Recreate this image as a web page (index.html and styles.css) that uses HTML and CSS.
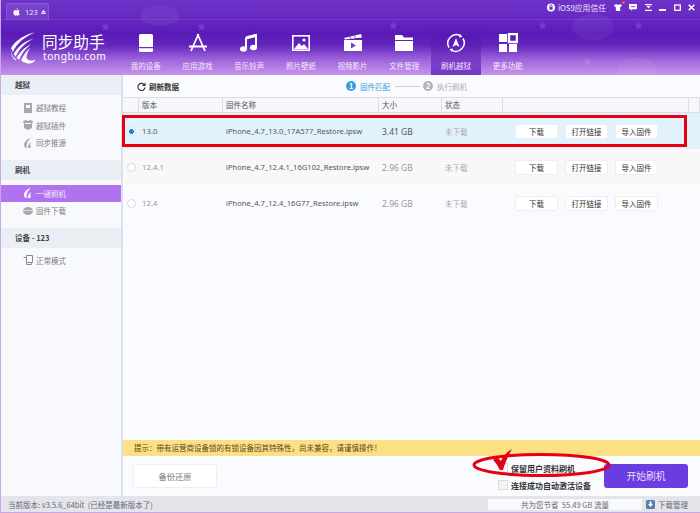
FILE: index.html
```html
<!DOCTYPE html>
<html lang="zh-CN">

<head>
  <meta charset="UTF-8" />
  <title>同步助手</title>
  <link rel="stylesheet" href="styles.css">
</head>

<body>
  <div class="app">
    <!-- Header -->
    <header class="header">
      <span class="cloud cloud-a"></span>
      <span class="cloud cloud-b"></span>
      <span class="cloud cloud-c"></span>
      <span class="star star-a"></span>
      <span class="star star-b"></span>
      <span class="star star-c"></span>
      <span class="star star-d"></span>
      <span class="star star-e"></span>
      <span class="star star-f"></span>

      <div class="top-strip">
        <div class="device-tab">
          <svg class="apple" viewBox="0 0 12 14"><path d="M8.400 0c.1 1.400-1 2.700-2.400 2.700C5.900 1.400 7.100.1 8.400 0zM11.500 10c-.6 1.500-1.600 3.500-2.900 3.500-.9 0-1.300-.6-2.400-.6s-1.500.6-2.400.6C2.300 13.500.5 10.500.5 8c0-2.600 1.700-4.300 3.400-4.300 1 0 1.700.6 2.400.6s1.400-.7 2.600-.7c1 0 2 .5 2.600 1.400-2.100 1.200-1.800 4.100 0 5z" fill="#fff"/></svg>
          <span>123</span>
          <svg class="eject" viewBox="0 0 6 5"><path d="M3 0l3 3H0zM0 4h6v1H0z" fill="#fff"/></svg>
        </div>
        <div class="top-tools">
          <svg class="tool lock" viewBox="0 0 9 10"><circle cx="4.500" cy="5" r="4.500" fill="#fff"/><rect x="2.700" y="4.500" width="3.600" height="3" fill="#6a2cc4"/><path d="M3.300 4.500V3.300a1.200 1.200 0 0 1 2.400 0v1.200" fill="none" stroke="#6a2cc4"/></svg>
          <span class="trust">iOS9应用信任</span>
          <span class="shirt-wrap">
            <svg class="tool wide" viewBox="0 0 9 8"><path d="M2.500 0L0 1.500l1 2 1-.5V8h5V3l1 .5 1-2L6.500 0C6 1.200 3 1.200 2.500 0z" fill="#fff"/></svg>
            <i class="red-dot"></i>
          </span>
          <svg class="tool wide" viewBox="0 0 9 8"><path d="M0 0h9v6H4L2.500 8V6H0z" fill="#fff"/><path d="M2 3h5" stroke="#6a2cc4"/></svg>
          <svg class="tool" viewBox="0 0 7 7"><path d="M0 0h7v1.300H0zM0 5.700h7V7H0zM1.500 2h4L3.500 4.500z" fill="#fff"/></svg>
          <svg class="tool" viewBox="0 0 7 7"><path d="M0 5h7v2H0z" fill="#fff"/></svg>
          <svg class="tool" viewBox="0 0 7 7"><rect x=".7" y="1" width="5.600" height="5.300" fill="none" stroke="#fff" stroke-width="1.300"/></svg>
          <svg class="tool" viewBox="0 0 7 7"><path d="M.7.7l5.600 5.600M6.300.7L.7 6.300" stroke="#fff" stroke-width="1.600"/></svg>
        </div>
      </div>

      <div class="header-main">
        <div class="logo">
          <svg class="logo-mark" viewBox="0 0 30 33">
            <path d="M27 0C16 2 6 8 1 17c1 1 2 3 2 4C7 12 16 4 27 0z" fill="#fff"/>
            <path d="M26 6C16 9 9 14 4 23l2 3C10 17 16 11 26 6z" fill="#fff"/>
            <path d="M23 12c-6 3-12 8-16 15l3 2c2-6 7-12 13-17z" fill="#fff"/>
            <path d="M22 16c-5 4-8 9-10 14 2 2 5 3 8 3 4 0 7-2 7-4-3 2-7 1-9-1-1-3 1-8 4-12z" fill="#fff"/>
            <path d="M1 20c0 4 2 8 5 10l1-1C4 27 2 24 1 20z" fill="#f1e6fb"/>
          </svg>
          <div class="logo-text">
            <div class="logo-cn">同步助手</div>
            <div class="logo-en">tongbu.com</div>
          </div>
        </div>
        <nav class="nav">
          <a class="nav-item">
            <svg viewBox="0 0 20 20"><path d="M4.500 1h11A1.500 1.500 0 0 1 17 2.500V14H3V2.500A1.500 1.500 0 0 1 4.500 1zM3 15.200h14v2.300a1.500 1.500 0 0 1-1.500 1.500h-11A1.500 1.500 0 0 1 3 17.500z" fill="#fff"/></svg>
            <span>我的设备</span>
          </a>
          <a class="nav-item">
            <svg viewBox="0 0 20 20"><path d="M10.500 1L3 18M9.500 1L17 18M1 13.500h18" fill="none" stroke="#fff" stroke-width="1.800"/></svg>
            <span>应用游戏</span>
          </a>
          <a class="nav-item">
            <svg viewBox="0 0 20 20"><path d="M7 4.500L17 2v12.500M7 4.500V16" fill="none" stroke="#fff" stroke-width="2"/><path d="M7 3.500L17 1v3L7 6.500z" fill="#fff"/><ellipse cx="4.500" cy="16" rx="3.500" ry="2.800" fill="#fff"/><ellipse cx="14.500" cy="14.500" rx="3.500" ry="2.800" fill="#fff"/></svg>
            <span>音乐铃声</span>
          </a>
          <a class="nav-item">
            <svg viewBox="0 0 20 20"><rect x="1.800" y="2.800" width="16.400" height="14.400" fill="none" stroke="#fff" stroke-width="1.600"/><path d="M3 16l5-6 3 3 2-2 4 5z" fill="#fff"/><circle cx="13" cy="7" r="1.600" fill="#fff"/></svg>
            <span>照片壁纸</span>
          </a>
          <a class="nav-item">
            <svg viewBox="0 0 20 20"><path d="M1 7h18v11H1z" fill="#fff"/><path d="M1 5l17-4 1 3.500L2 6.500z" fill="#fff"/><path d="M8 9.500l5 3-5 3z" fill="#7a3dcb"/><path d="M6 2.800l2 3M10.500 1.800l2 3" stroke="#7a3dcb"/></svg>
            <span>视频影片</span>
          </a>
          <a class="nav-item">
            <svg viewBox="0 0 20 20"><path d="M1 2h7l2 2.500h9V7H1zM1 8h18v10H1z" fill="#fff"/></svg>
            <span>文件管理</span>
          </a>
          <a class="nav-item active">
            <svg viewBox="0 0 20 20"><path d="M3 14.500A8.500 8.500 0 0 1 14.500 2.800M17 5.500A8.500 8.500 0 0 1 5.500 17.200" fill="none" stroke="#fff" stroke-width="1.500"/><path d="M14 1l2.500 3-3.500.5zM6 19l-2.500-3 3.500-.5z" fill="#fff"/><path d="M10 5l3.500 9-3.500-2-3.500 2z" fill="#fff"/></svg>
            <span>刷机越狱</span>
          </a>
          <a class="nav-item">
            <svg viewBox="0 0 20 20"><rect x="1" y="1" width="8" height="8" fill="#fff"/><rect x="11" y="1" width="8" height="8" fill="none" stroke="#fff" stroke-width="2.500"/><rect x="1" y="11" width="8" height="8" fill="#fff"/><rect x="11" y="11" width="8" height="8" fill="#fff"/></svg>
            <span>更多功能</span>
          </a>
        </nav>
      </div>
    </header>

    <div class="content">
      <!-- Sidebar -->
      <aside class="sidebar">
        <div class="side-title">越狱</div>
        <ul class="side-list">
          <li>
            <svg viewBox="0 0 10 10"><path d="M1 0h8v10H1z" fill="#a8a8a8"/><path d="M3 2h4v3H3z" fill="#f8f9fc"/></svg>
            越狱教程
          </li>
          <li>
            <svg viewBox="0 0 10 10"><path d="M0 1l3-1 2 1 2-1 3 1-1 3v4l-4 2-4-2V4z" fill="#a8a8a8"/><path d="M2 3.500h6" stroke="#f8f9fc"/></svg>
            越狱插件
          </li>
          <li>
            <svg viewBox="0 0 10 10"><path d="M8 0C4 1 1 4 1 7c0 1 1 3 3 3-1-3 0-7 4-10z" fill="#a8a8a8"/><path d="M8 4C6 5 5 7 5 10c1 0 2 0 3-1-1-1-1-3 0-5z" fill="#a8a8a8"/></svg>
            同步推源
          </li>
        </ul>
        <div class="side-title">刷机</div>
        <ul class="side-list flash">
          <li class="active">
            <svg viewBox="0 0 10 10"><path d="M8 0C4 1 1 4 1 7c0 1 1 3 3 3-1-3 0-7 4-10z" fill="#fff"/><path d="M8 4C6 5 5 7 5 10c1 0 2 0 3-1-1-1-1-3 0-5z" fill="#fff"/></svg>
            一键刷机
          </li>
          <li>
            <svg viewBox="0 0 10 10"><ellipse cx="5" cy="5" rx="5" ry="4" fill="#a8a8a8"/><path d="M0 4.500h10" stroke="#f8f9fc" stroke-width=".6"/></svg>
            固件下载
          </li>
        </ul>
        <div class="side-title">设备 - 123</div>
        <ul class="side-list">
          <li>
            <svg viewBox="0 0 10 10"><path d="M3.500.5h6v7h-6zM.5 2.500h3v7h5v-2" fill="none" stroke="#8a8a8a"/></svg>
            正常模式
          </li>
        </ul>
      </aside>

      <!-- Main -->
      <main class="main">
        <div class="toolbar">
          <div class="refresh">
            <svg viewBox="0 0 10 10"><path d="M8.500 3.500A4 4 0 1 0 9 6" fill="none" stroke="#333" stroke-width="1.200"/><path d="M9.500 .5v4h-4z" fill="#333"/></svg>
            刷新数据
          </div>
          <div class="steps">
            <i class="step-num current">1</i>
            <span class="step-text current">固件匹配</span>
            <i class="step-line"></i>
            <i class="step-num">2</i>
            <span class="step-text">执行刷机</span>
          </div>
        </div>

        <div class="table-head">
          <div></div>
          <div>版本</div>
          <div>固件名称</div>
          <div>大小</div>
          <div>状态</div>
          <div></div>
          <div></div>
        </div>

        <div class="rows">
          <div class="row selected">
            <div class="radio-cell"><i class="radio on"></i></div>
            <div class="ver">13.0</div>
            <div class="name">iPhone_4.7_13.0_17A577_Restore.ipsw</div>
            <div class="size">3.41 GB</div>
            <div class="state">未下载</div>
            <div class="actions">
              <button class="mini-btn">下载</button>
              <button class="mini-btn">打开链接</button>
              <button class="mini-btn">导入固件</button>
            </div>
          </div>
          <div class="row alt">
            <div class="radio-cell"><i class="radio"></i></div>
            <div class="ver">12.4.1</div>
            <div class="name">iPhone_4.7_12.4.1_16G102_Restore.ipsw</div>
            <div class="size">2.96 GB</div>
            <div class="state">未下载</div>
            <div class="actions">
              <button class="mini-btn">下载</button>
              <button class="mini-btn">打开链接</button>
              <button class="mini-btn">导入固件</button>
            </div>
          </div>
          <div class="row">
            <div class="radio-cell"><i class="radio"></i></div>
            <div class="ver">12.4</div>
            <div class="name">iPhone_4.7_12.4_16G77_Restore.ipsw</div>
            <div class="size">2.96 GB</div>
            <div class="state">未下载</div>
            <div class="actions">
              <button class="mini-btn">下载</button>
              <button class="mini-btn">打开链接</button>
              <button class="mini-btn">导入固件</button>
            </div>
          </div>
        </div>

        <div class="notice">提示：带有运营商设备锁的有锁设备因其特殊性，尚未兼容，请谨慎操作！</div>

        <div class="bottom">
          <button class="backup-btn">备份还原</button>
          <div class="options">
            <label class="option"><i class="check"></i>保留用户资料刷机</label>
            <label class="option"><i class="check"></i>连接成功自动激活设备</label>
          </div>
          <button class="start-btn">开始刷机</button>
        </div>
      </main>
    </div>

    <!-- Status bar -->
    <footer class="status">
      <div class="version">当前版本: v3.5.6_64bit &nbsp;(已经是最新版本了)</div>
      <div class="saved">共为您节省 &nbsp;55.49 GB 流量</div>
      <div class="downloads">
        <svg viewBox="0 0 9 9"><rect width="9" height="9" rx="1.500" fill="#5a7fa8"/><path d="M3.500 1.500h2V4H7L4.500 7 2 4h1.500z" fill="#fff"/></svg>
        下载管理
      </div>
    </footer>

    <!-- Red annotations drawn over the window -->
    <div class="mark-rect"></div>
    <svg class="mark-oval" viewBox="0 0 700 513">
      <ellipse cx="541.500" cy="465" rx="67.500" ry="10.500" fill="none" stroke="#e60012" stroke-width="3"/>
      <path d="M493 460l4-3 4 4c2-5 6-9 11-12-4 7-7 14-9 21h-3c-2-4-4-7-7-10z" fill="#e60012"/>
    </svg>
  </div>
</body>

</html>
```

FILE: styles.css
```css
* {
  box-sizing: border-box;
}

body {
  margin: 0;
  font-family: "Noto Sans CJK SC", "Noto Sans", sans-serif;
  font-size: 7.5px;
  color: #444;
  background: #f8f9fc;
  overflow: hidden;
}

.app {
  position: relative;
  display: flex;
  flex-direction: column;
  width: 700px;
  height: 513px;
  border-left: 1px solid #c9a8ea;
  border-bottom: 1px solid #c9a8ea;
  overflow: hidden;
}

/* Header */
.header {
  position: relative;
  flex: none;
  height: 75px;
  margin-left: -1px;
  background: linear-gradient(#6e33c8 0, #662ac2 18px, #5a1ab8 34px, #6126bc 45px, #a066dc 60px, #c893ec 75px);
  overflow: hidden;
}

.cloud {
  position: absolute;
  border-radius: 50%;
  background: rgba(255, 255, 255, 0.05);
}

.cloud-a {
  left: 140px;
  top: 6px;
  width: 40px;
  height: 20px;
}

.cloud-b {
  left: 572px;
  top: 14px;
  width: 42px;
  height: 26px;
}

.cloud-c {
  left: 617px;
  top: 58px;
  width: 40px;
  height: 24px;
}

.star {
  position: absolute;
  width: 9px;
  height: 9px;
  background: rgba(255, 255, 255, 0.13);
  clip-path: polygon(50% 0, 63% 35%, 100% 38%, 71% 60%, 81% 96%, 50% 75%, 19% 96%, 29% 60%, 0 38%, 37% 35%);
}

.star-a {
  left: 101px;
  top: 22px;
}

.star-b {
  left: 197px;
  top: 22px;
}

.star-c {
  left: 389px;
  top: 21px;
}

.star-d {
  left: 538px;
  top: 21px;
}

.star-e {
  left: 634px;
  top: 21px;
}

.star-f {
  left: 583px;
  top: 57px;
}

.top-strip {
  position: relative;
  display: flex;
  justify-content: space-between;
  height: 20px;
  padding-left: 6px;
  border-bottom: 1px solid rgba(255, 255, 255, 0.08);
}

.device-tab {
  display: flex;
  align-items: center;
  width: 43px;
  height: 17px;
  margin-top: 3px;
  padding-left: 6px;
  color: #f0e6fb;
  font-family: "Noto Sans", sans-serif;
  font-size: 7.500px;
  background: rgba(255, 255, 255, 0.09);
  border: 1px solid rgba(255, 255, 255, 0.12);
  border-bottom: none;
  border-radius: 2px 2px 0 0;
}

.apple {
  width: 7px;
  height: 8px;
  margin-right: 5px;
}

.eject {
  width: 5px;
  height: 4px;
  margin-left: 3px;
}

.top-tools {
  display: flex;
  align-items: center;
  gap: 7.500px;
  padding-right: 5px;
  padding-bottom: 4px;
}

.tool {
  display: block;
  width: 7px;
  height: 7px;
}

.tool.wide {
  width: 8px;
}

.lock {
  width: 8px;
  height: 9px;
  margin-right: -5px;
}

.trust {
  color: #efe3fb;
  font-size: 7.800px;
}

.shirt-wrap {
  position: relative;
  display: block;
}

.red-dot {
  position: absolute;
  top: -3px;
  right: -3px;
  width: 3px;
  height: 3px;
  border-radius: 50%;
  background: #ff5a36;
}

.header-main {
  position: relative;
  display: flex;
  height: 55px;
}

.logo {
  display: flex;
  width: 120px;
  padding: 12px 0 0 10px;
}

.logo-mark {
  flex: none;
  width: 28px;
  height: 32px;
}

.logo-text {
  margin-left: 4px;
  color: #fff;
}

.logo-cn {
  font-size: 15.700px;
  line-height: 19px;
  margin-top: 0;
  white-space: nowrap;
}

.logo-en {
  font-family: "Noto Sans", sans-serif;
  font-size: 10.200px;
  line-height: 10px;
  letter-spacing: 0.500px;
  margin-left: 1px;
}

.nav {
  display: flex;
  gap: 2px;
  margin-left: 1px;
}

.nav-item {
  display: flex;
  flex-direction: column;
  align-items: center;
  width: 49.700px;
  padding-top: 13px;
  color: #f3e9fc;
}

.nav-item svg {
  width: 20px;
  height: 20px;
}

.nav-item span {
  margin-top: 7px;
  line-height: 12px;
  white-space: nowrap;
}

.nav-item.active {
  background: linear-gradient(rgba(80, 20, 170, 0) 0, rgba(80, 20, 170, 0.45) 30px, #7436c4 55px);
}

/* Sidebar */
.content {
  display: flex;
  flex: 1;
  min-height: 0;
}

.sidebar {
  flex: none;
  width: 122px;
  background: #f8f9fc;
  border-right: 2px solid #dcdff0;
}

.side-title {
  height: 20px;
  padding-left: 14px;
  line-height: 20px;
  font-weight: 700;
  color: #444;
  background: #eaeef5;
}

.side-list {
  margin: 0;
  padding: 4px 0 8px;
  list-style: none;
}

.side-list.flash {
  padding-top: 5px;
}

.side-list li {
  display: flex;
  align-items: center;
  height: 17.500px;
  padding-left: 22px;
  color: #808080;
}

.side-list li svg {
  width: 10px;
  height: 10px;
  margin-right: 3px;
}

.side-list li.active {
  color: #f3e9fc;
  background: #b072ee;
}

/* Main */
.main {
  display: flex;
  flex: 1;
  flex-direction: column;
  min-width: 0;
  background: #fafbfe;
}

.toolbar {
  display: flex;
  flex: none;
  align-items: center;
  height: 22px;
  padding-left: 14px;
}

.refresh {
  display: flex;
  align-items: center;
  width: 209px;
  font-weight: 700;
  color: #333;
}

.refresh svg {
  width: 9px;
  height: 9px;
  margin-right: 3px;
}

.steps {
  display: flex;
  align-items: center;
  color: #b0b0b0;
}

.step-num {
  display: block;
  width: 10px;
  height: 10px;
  margin-right: 4px;
  border-radius: 50%;
  color: #fff;
  font-style: normal;
  font-weight: 700;
  font-size: 7px;
  line-height: 10px;
  text-align: center;
  background: #b4b4b4;
}

.step-num.current {
  background: #3a9ddb;
}

.step-text.current {
  color: #3a9ddb;
}

.step-line {
  display: block;
  width: 25px;
  height: 1px;
  margin: 0 3px 0 5px;
  background: #d0d0d0;
}

.table-head,
.row {
  display: grid;
  grid-template-columns: 16px 84px 156px 63px 61px 186px 11px;
}

.table-head {
  flex: none;
  height: 16px;
  line-height: 14px;
  color: #555;
  background: #f6f7fa;
  border-top: 1px solid #dcdde4;
  border-bottom: 1px solid #dcdde4;
}

.table-head div {
  padding-left: 3px;
  border-right: 1px solid #dcdde4;
}

.rows {
  flex: 1;
  min-height: 0;
}

.row {
  align-items: center;
  height: 36px;
  color: #999;
}

.row.selected {
  color: #555;
  background: #e2f2fd;
}

.row.alt {
  background: #f8f8f8;
}

.radio-cell {
  display: flex;
  justify-content: center;
}

.radio {
  display: block;
  width: 9px;
  height: 9px;
  background: #fff;
  border: 1px solid #d8d8d8;
  border-radius: 50%;
}

.radio.on {
  border-color: #d2e2ee;
  background: radial-gradient(circle, #1a86d6 0, #1a86d6 2.200px, #fff 2.800px);
}

.size {
  padding-left: 3px;
  font-family: "Noto Sans", sans-serif;
  font-size: 8.500px;
}

.ver {
  padding-left: 3px;
  font-family: "Noto Sans", sans-serif;
  font-size: 7.800px;
}

.name {
  padding-left: 3px;
  color: #555;
  font-family: "Noto Sans", sans-serif;
  font-size: 7.600px;
  white-space: nowrap;
}

.state {
  padding-left: 3px;
  color: #aaa;
}

.actions {
  display: flex;
  gap: 7px;
  padding-left: 12px;
}

.mini-btn {
  width: 43px;
  height: 15px;
  padding: 0;
  color: #333;
  font: inherit;
  background: #fff;
  border: 1px solid #eeeeee;
  border-radius: 2px;
}

.notice {
  flex: none;
  height: 16px;
  padding-left: 11px;
  line-height: 16px;
  color: #5a4a1a;
  background: #fbe084;
}

.bottom {
  display: flex;
  flex: none;
  align-items: center;
  height: 40px;
  padding: 0 12px 0 10px;
}

.backup-btn,
.start-btn {
  width: 84px;
  height: 24px;
  padding: 0;
  font-family: inherit;
  border-radius: 3px;
}

.backup-btn {
  color: #777;
  font-size: 8.200px;
  background: #fff;
  border: 1px solid #eeeeee;
}

.options {
  display: flex;
  flex-direction: column;
  gap: 7px;
  width: 106px;
  margin-left: auto;
  margin-top: 1px;
}

.option {
  display: flex;
  align-items: center;
  height: 10px;
  font-size: 8px;
  font-weight: 700;
  white-space: nowrap;
  color: #333;
}

.check {
  display: block;
  width: 10px;
  height: 10px;
  margin-right: 3px;
  background: #f4f4f6;
  border: 1px solid #dddddd;
}

.start-btn {
  color: #e8dcff;
  font-size: 9.800px;
  background: #6a3de0;
  border: none;
}

/* Status bar */
.status {
  display: flex;
  flex: none;
  align-items: center;
  height: 16px;
  padding-left: 7px;
  color: #667;
  background: #e3e5ea;
}

.version {
  width: 480px;
}

.saved {
  width: 154px;
  height: 11px;
  line-height: 11px;
  text-align: center;
  background: #f8f9fb;
}

.downloads {
  display: flex;
  align-items: center;
  margin-left: 4px;
}

.downloads svg {
  width: 9px;
  height: 9px;
  margin-right: 3px;
}

/* Annotations */
.mark-rect {
  position: absolute;
  left: 121px;
  top: 115px;
  width: 565px;
  height: 32px;
  border: 3px solid #e60012;
}

.mark-oval {
  position: absolute;
  left: -1px;
  top: 0;
  width: 700px;
  height: 513px;
  pointer-events: none;
}
```
